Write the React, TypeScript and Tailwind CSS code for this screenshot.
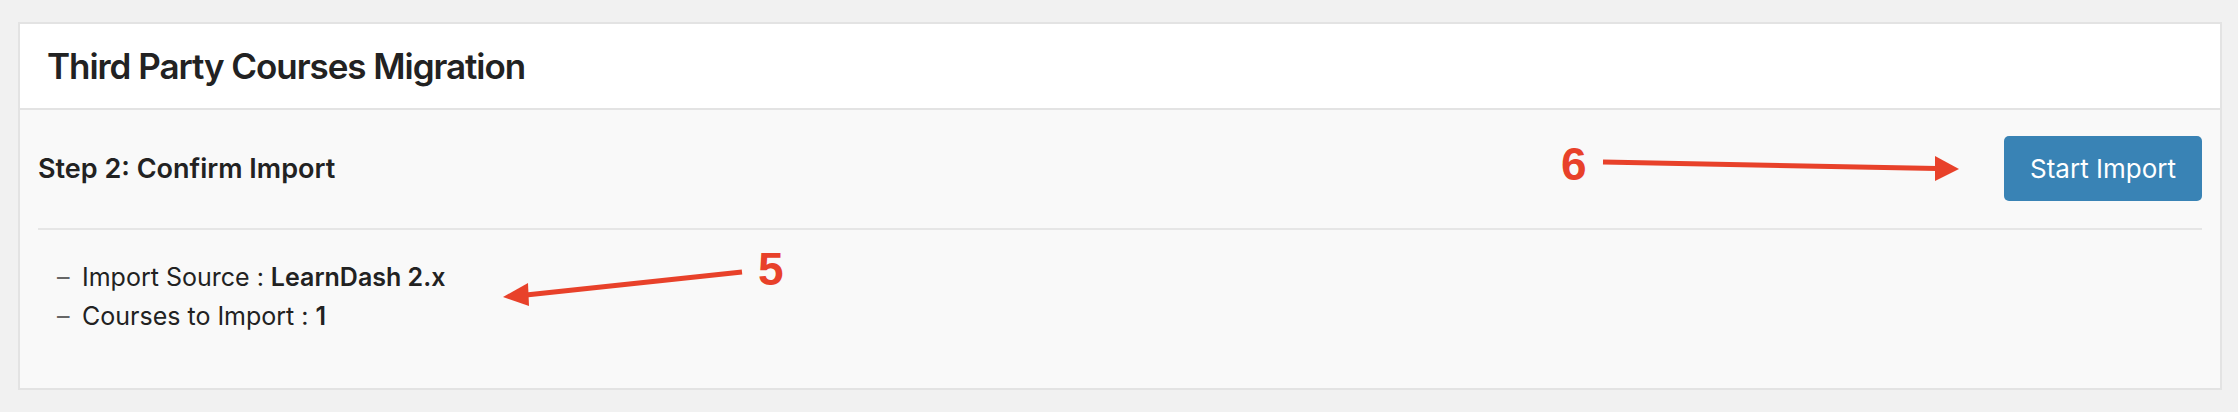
// Third party courses migration — step 2 confirm panel
import React from "react";

const summary = [
  { label: "Import Source", value: "LearnDash 2.x" },
  { label: "Courses to Import", value: "1" },
];

function Annotations() {
  return (
    <>
      <svg
        className="absolute inset-0 pointer-events-none"
        width="2238"
        height="412"
        viewBox="0 0 2238 412"
      >
        {/* arrow 6 → button */}
        <line x1="1603" y1="162" x2="1937" y2="168.5" stroke="#e8412a" strokeWidth="5" />
        <polygon points="1935,156 1959,169 1935,181" fill="#e8412a" />
        {/* arrow 5 → summary */}
        <line x1="742" y1="272" x2="526" y2="295" stroke="#e8412a" strokeWidth="5" />
        <polygon points="528,283 503,297 529,306" fill="#e8412a" />
      </svg>
      <span className="absolute left-[1561px] top-[141px] text-[46px] leading-none font-bold text-[#e8412a] font-['Liberation_Sans',Arial,sans-serif]">
        6
      </span>
      <span className="absolute left-[758px] top-[246px] text-[46px] leading-none font-bold text-[#e8412a] font-['Liberation_Sans',Arial,sans-serif]">
        5
      </span>
    </>
  );
}

export default function App() {
  return (
    <div className="relative min-h-[412px] bg-[#f1f1f1] pt-[22px] pl-[18px] pr-[16px] pb-[20px] font-['Inter','Noto_Sans',sans-serif] text-[#222]">
      <div className="border-2 border-[#e3e3e3] bg-[#f9f9f9]">
        {/* Header */}
        <div className="h-[86px] flex items-center pl-[27px] bg-white border-b-2 border-[#e3e3e3]">
          <h2 className="text-[35px] font-semibold tracking-[-0.03em] leading-none">
            Third Party Courses Migration
          </h2>
        </div>

        {/* Body */}
        <div className="px-[18px] pb-[52px]">
          <div className="flex items-center justify-between pt-[26px] pb-[27px]">
            <h3 className="text-[27px] font-semibold leading-none">Step 2: Confirm Import</h3>
            <button className="w-[198px] h-[65px] rounded-[5px] bg-[#3983b5] text-white text-[26px]">
              Start Import
            </button>
          </div>
          <div className="h-[2px] bg-[#e6e6e6]" />
          <ul className="pt-[28px] pl-[19px]">
            {summary.map((s) => (
              <li key={s.label} className="flex text-[25px] leading-[39px]">
                <span className="w-[25px] text-[#666]">–</span>
                <span>
                  {s.label} : <b className="font-semibold">{s.value}</b>
                </span>
              </li>
            ))}
          </ul>
        </div>
      </div>
      <Annotations />
    </div>
  );
}
